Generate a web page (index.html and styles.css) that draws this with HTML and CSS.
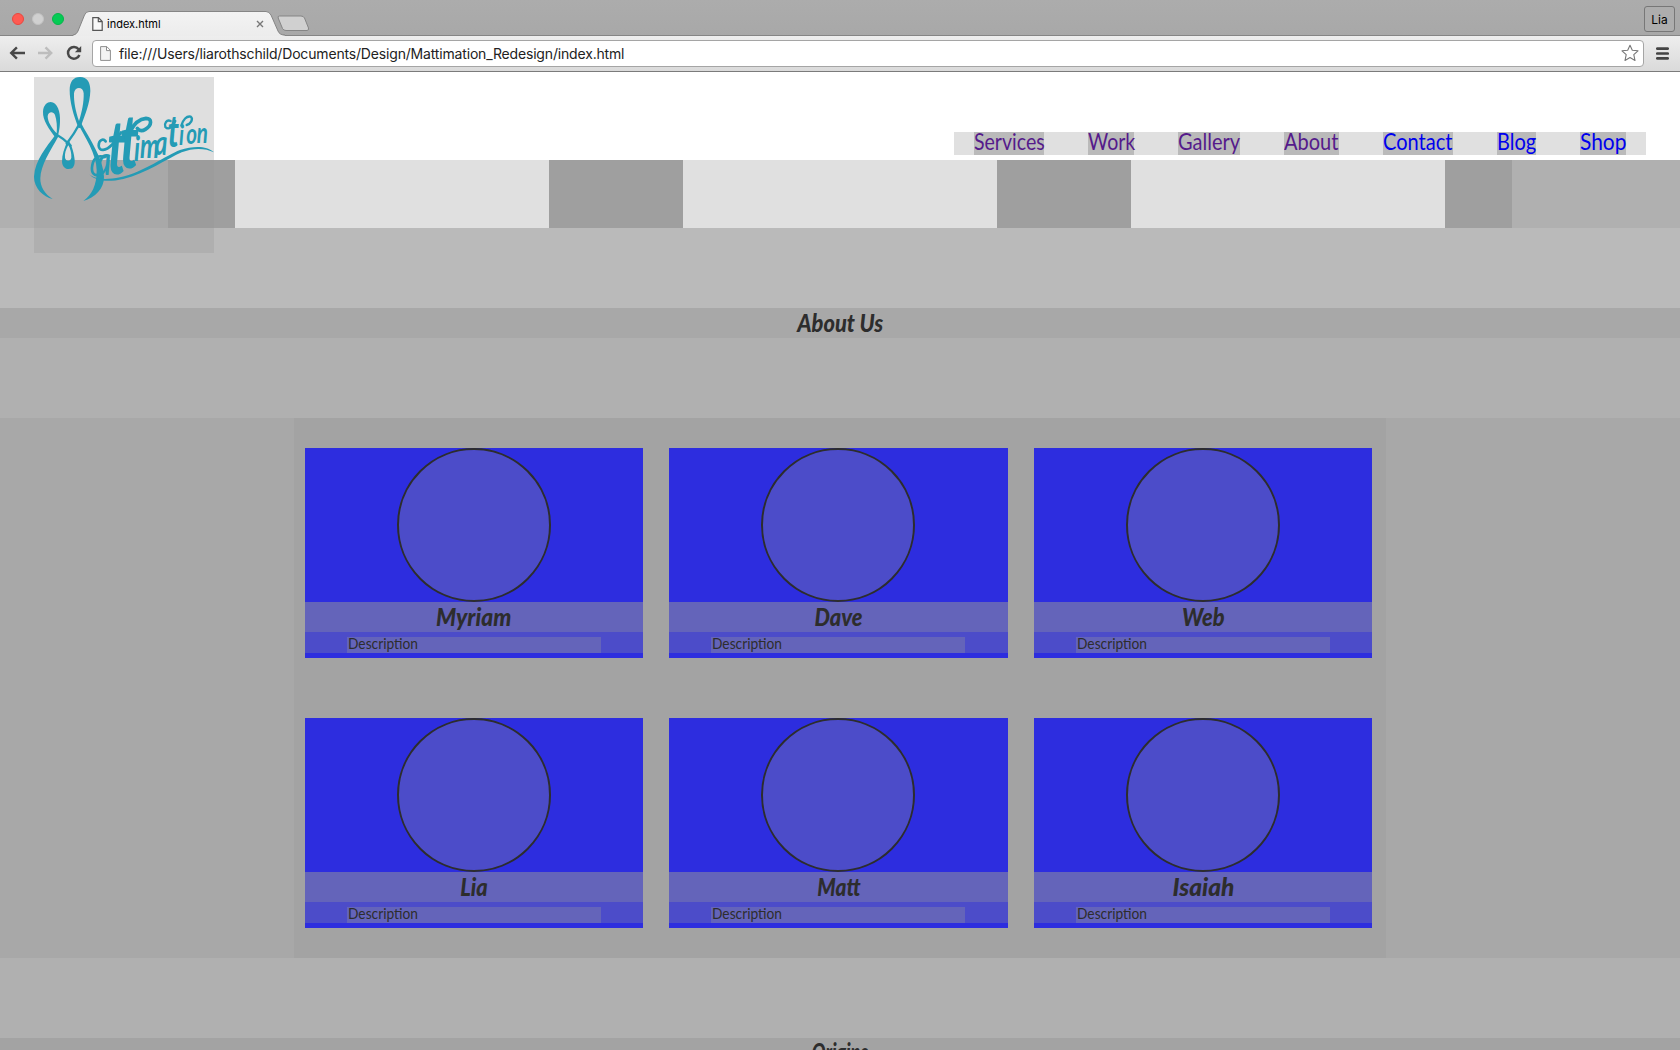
FILE: index.html
```html
<!DOCTYPE html>
<html lang="en">
<head>
<meta charset="utf-8">
<title>index.html</title>
<link rel="stylesheet" href="styles.css">
</head>
<body>
<header class="browser">
  <div class="tabstrip">
    <div class="lights"><i class="light red"></i><i class="light idle"></i><i class="light green"></i></div>
    <div class="tab">
      <svg class="tab-shape" width="212" height="25" viewBox="0 0 212 25">
        <defs><linearGradient id="tabfill" x1="0" y1="0" x2="0" y2="1"><stop offset="0" stop-color="#f3f3f3"/><stop offset="1" stop-color="#ececec"/></linearGradient></defs>
        <path d="M0 24.5C3 24 4 22 5 20L11.500 4Q13 .5 16 .5H193Q196 .5 198 4L205 20C206 22.500 208 24 212 24.500V25H0Z" fill="url(#tabfill)"/>
        <path d="M0 24C3 23.500 4 22 5 20L11.500 4Q13 .5 16 .5H193Q196 .5 198 4L205 20C206 22.500 208 24 212 24" fill="none" stroke="#858585"/>
      </svg>
      <svg class="tab-page" width="11" height="14" viewBox="0 0 11 14"><path d="M.8.7H6.500L10.200 4.500V13.300H.8ZM6.300.7V4.700H10.200" fill="#f8f8f8" stroke="#555" stroke-width="1.200"/></svg>
      <span class="tab-title">index.html</span>
      <svg class="tab-close" width="8" height="8" viewBox="0 0 8 8"><path d="M1 1L7 7M7 1L1 7" stroke="#777" stroke-width="1.400"/></svg>
    </div>
    <svg class="newtab" width="33" height="17" viewBox="0 0 33 17"><path d="M2.500 1H24Q26.500 1 27.500 3L31.500 13Q32 15.500 30 15.500H9Q6.500 15.500 5.500 13.500L1.200 3Q.5 1 2.500 1Z" fill="#d0d0d0" stroke="#858585"/></svg>
    <div class="user">Lia</div>
  </div>
  <div class="toolbar">
    <svg width="16" height="14" viewBox="0 0 16 14"><path d="M16 7H2.500M7.900 1.300L2.200 7L7.900 12.700" fill="none" stroke="#484848" stroke-width="2.400"/></svg>
    <svg width="16" height="14" viewBox="0 0 16 14"><path d="M1 7H13.500M8.500 1.300L14.200 7L8.500 12.700" fill="none" stroke="#bdbdbd" stroke-width="2.400"/></svg>
    <svg class="reload" width="16" height="16" viewBox="0 0 16 16"><path d="M12.600 4.200A5.900 5.900 0 1 0 13.400 10" fill="none" stroke="#484848" stroke-width="2.500"/><path d="M15.200 1V7.300H8.900Z" fill="#484848"/></svg>
    <div class="address">
      <svg width="11" height="15" viewBox="0 0 11 15"><path d="M.6.6H6.800L10.400 4.300V14.400H.6ZM6.500.6V4.600H10.400" fill="#f3f3f3" stroke="#8e8e8e"/></svg>
      <span class="url">file:///Users/liarothschild/Documents/Design/Mattimation_Redesign/index.html</span>
      <svg class="star" width="18" height="18" viewBox="0 0 18 18"><path d="M9 1.200L11.300 6.200L17 6.800L12.800 10.700L14 16.500L9 13.600L4 16.500L5.200 10.700L1 6.800L6.700 6.200Z" fill="#fff" stroke="#777" stroke-width="1.100" stroke-linejoin="round"/></svg>
    </div>
    <svg class="menu" width="13" height="13" viewBox="0 0 13 13"><path d="M1.300 1.600H11.700M1.300 6.500H11.700M1.300 11.400H11.700" stroke="#444" stroke-width="2.700" stroke-linecap="round"/></svg>
  </div>
</header>

<main class="page">
  <div class="logo">
    <svg width="180" height="176" viewBox="42 36 540 528" fill="#249bb5">
      <g fill-rule="evenodd">
        <path d="M110 222C85 190 68 165 69 140C70 120 82 111 92 111C112 112 122 140 120 170C119 195 115 210 110 222ZM110 205C95 190 83 170 83 154C84 140 100 138 105 150C110 165 112 185 110 205Z"/>
        <path d="M144 226C132 250 126 270 126 290C127 305 136 312 146 312C160 312 165 302 164 285C162 262 155 242 148 230ZM145 240C137 255 134 265 135 278C137 290 152 290 154 278C155 265 151 250 145 240Z"/>
        <path d="M176 190C160 150 149 110 149 75C149 50 160 36 180 36C202 36 211 52 211 78C210 115 195 150 181 188ZM177 168C167 140 161 110 162 85C164 64 190 64 191 85C192 110 186 140 177 168Z"/>
      </g>
      <path d="M106 210C80 245 45 285 42 335C42 370 70 395 98 402C75 388 60 365 61 340C62 300 90 260 116 212Z"/>
      <path d="M171 172C195 215 230 270 230 315C231 360 215 390 190 408C225 398 253 370 252 335C250 280 210 225 182 172Z"/>
      <path d="M205 325C222 345 260 345 300 337C370 322 440 270 480 255C520 242 560 241 582 262C555 249 520 248 485 262C440 282 380 325 310 342C265 352 225 350 205 325Z"/>
      <g fill="none" stroke="#249bb5" stroke-linecap="round">
        <path d="M108 208Q130 220 152 242M180 174Q162 208 140 236" stroke-width="7"/>
        <path d="M257 229C250 220 236 224 236 242C237 260 258 258 275 240C290 222 298 212 303 202M217 300C222 275 238 270 254 276M217 300C212 325 225 338 240 325" stroke-width="8"/>
        <path d="M330 200C340 180 355 162 378 160C396 160 397 180 376 193C366 199 357 196 352 190" stroke-width="11"/>
        <path d="M452 168C440 162 432 176 436 186C446 197 461 184 466 168M484 182C489 164 500 152 512 155C521 162 512 177 500 180" stroke-width="7"/>
      </g>
      <text class="logo-word" transform="scale(.7 1)"><tspan class="g-a" x="328" y="330">a</tspan><tspan class="g-t" x="374 428" y="327 310">tt</tspan><tspan class="g-m" x="489 514" y="288 280">im</tspan><tspan class="g-m" x="577" y="270">a</tspan><tspan class="g-t2" x="633" y="246">t</tspan><tspan class="g-n" x="681 712 758" y="240 238 235">ion</tspan></text>
    </svg>
  </div>

  <nav class="nav">
    <ul>
      <li><a class="seen"><span class="fit w85">Services</span></a></li>
      <li><a class="seen"><span class="fit w85">Work</span></a></li>
      <li><a class="seen"><span class="fit w88">Gallery</span></a></li>
      <li><a class="seen"><span class="fit w88">About</span></a></li>
      <li><a><span class="fit w88">Contact</span></a></li>
      <li><a><span class="fit w88">Blog</span></a></li>
      <li><a><span class="fit w91">Shop</span></a></li>
    </ul>
  </nav>

  <div class="strip"><i></i><i></i><i></i><i></i><i></i><i></i><i></i><i></i><i></i></div>
  <div class="spacer"></div>
  <h2 class="heading"><span class="fit w91">About Us</span></h2>
  <section class="team">
    <div class="people">
      <article class="card"><div class="photo"></div><h3><span class="fit w95">Myriam</span></h3><div class="desc"><p><span class="fit w86">Description</span></p></div></article>
      <article class="card"><div class="photo"></div><h3><span class="fit w91">Dave</span></h3><div class="desc"><p><span class="fit w86">Description</span></p></div></article>
      <article class="card"><div class="photo"></div><h3><span class="fit w91">Web</span></h3><div class="desc"><p><span class="fit w86">Description</span></p></div></article>
      <article class="card"><div class="photo"></div><h3><span class="fit w91">Lia</span></h3><div class="desc"><p><span class="fit w86">Description</span></p></div></article>
      <article class="card"><div class="photo"></div><h3><span class="fit w88">Matt</span></h3><div class="desc"><p><span class="fit w86">Description</span></p></div></article>
      <article class="card"><div class="photo"></div><h3><span class="fit w102">Isaiah</span></h3><div class="desc"><p><span class="fit w86">Description</span></p></div></article>
    </div>
  </section>
  <h2 class="heading origins"><span class="fit w76">Origins</span></h2>
</main>
</body>
</html>
```

FILE: styles.css
```css
* { box-sizing: border-box; }
body {
  margin: 0;
  height: 1050px;
  overflow: hidden;
  background: #fff;
  color: #2d2d2d;
  font-family: Lato, "Liberation Sans", sans-serif;
}
h2, h3, p, ul { margin: 0; padding: 0; }
svg { display: block; flex: none; }

/* browser window */
.browser { font-family: Inter, "Liberation Sans", sans-serif; color: #000; }
.tabstrip {
  display: flex;
  align-items: flex-end;
  height: 36px;
  padding-right: 5px;
  background: linear-gradient(#acacac, #a8a8a8);
  box-shadow: inset 0 -1px #858585;
}
.lights { display: flex; gap: 8px; width: 74px; padding: 0 0 11px 12px; }
.light { width: 12px; height: 12px; border-radius: 50%; }
.red { background: #ff5a52; border: 1px solid #e8483f; }
.idle { background: #d0d0d0; border: 1px solid #c2c2c2; }
.green { background: #05cb55; border: 1px solid #06b54a; }
.tab {
  position: relative;
  display: flex;
  align-items: center;
  width: 205px;
  height: 25px;
  padding-left: 18px;
}
.tab-shape { position: absolute; left: -1px; top: 0; }
.tab-page, .tab-title, .tab-close { position: relative; }
.tab-title { margin-left: 4px; font-size: 11px; line-height: 14px; }
.tab-close { margin-left: 95px; }
.newtab { margin: 0 auto 4px -2px; }
.user {
  width: 31px;
  height: 26px;
  margin-bottom: 4px;
  border: 1px solid #777;
  border-radius: 3px;
  background: #adadad;
  font-size: 12px;
  line-height: 25px;
  text-align: center;
}
.toolbar {
  display: flex;
  align-items: center;
  gap: 12px;
  height: 36px;
  padding: 0 11px 1px 9px;
  border-bottom: 1px solid #7b7b7b;
  background: linear-gradient(#eee, #dadada);
}
.reload { margin: 0 -1px 0 1px; }
.address {
  display: flex;
  align-items: center;
  flex: 1;
  height: 27px;
  margin-left: -1px;
  padding: 0 4px 0 7px;
  border: 1px solid #a5a5a5;
  border-radius: 4px;
  background: #fff;
}
.url { margin-left: 8px; font-size: 14px; letter-spacing: -.17px; color: #222; white-space: nowrap; }
.star { margin-left: auto; }

/* page */
.page { position: relative; }
.logo {
  position: absolute;
  left: 34px;
  top: 5px;
  width: 180px;
  height: 176px;
  background: rgba(150, 150, 150, .3);
}
.logo-word { font-weight: 700; font-style: italic; }
.g-a { font-size: 118px; }
.g-t { font-size: 225px; }
.g-m { font-size: 104px; }
.g-t2 { font-size: 132px; }
.g-n { font-size: 88px; }

.fit { display: inline-block; transform-origin: 0 50%; white-space: nowrap; }
.w76 { transform: scaleX(.76); }
.w85 { transform: scaleX(.85); }
.w86 { transform: scaleX(.86); }
.w88 { transform: scaleX(.87); }
.w91 { transform: scaleX(.91); }
.w95 { transform: scaleX(.95); }
.w102 { transform: scaleX(1.02); }

.nav { display: flex; justify-content: flex-end; height: 88px; padding: 60px 34px 5px; }
.nav ul {
  display: grid;
  grid-template-columns: 70px 46px 62px 55px 70px 39px 46px;
  column-gap: 44px;
  height: 23px;
  width: 692px;
  padding-left: 20px;
  background: #e0e0e0;
  list-style: none;
}
.nav a {
  display: block;
  height: 23px;
  background: #bababa;
  color: #00e;
  font-size: 23px;
  line-height: 18px;
}
.nav a.seen { color: #551a8b; }

.strip { display: grid; grid-template-columns: 168px 67px 314px 134px 314px 134px 314px 67px 168px; height: 68px; }
.strip i { background: #e0e0e0; }
.strip i:nth-child(even) { background: #9f9f9f; }
.strip i:first-child, .strip i:last-child { background: #b0b0b0; }

.spacer { height: 80px; background: #bababa; }
.heading {
  height: 30px;
  background: #a8a8a8;
  font-size: 24px;
  font-weight: 900;
  font-style: italic;
  line-height: 29px;
  text-align: center;
}
.heading .fit, .card h3 .fit { transform-origin: 50% 50%; }
.team {
  display: flex;
  justify-content: center;
  border: solid #b0b0b0;
  border-width: 80px 0;
  background: #a8a8a8;
}
.people {
  display: grid;
  grid-template-columns: 338px 339px 338px;
  justify-content: start;
  column-gap: 26px;
  row-gap: 60px;
  width: 1092px;
  height: 540px;
  padding: 30px 11px;
  background: #a3a3a3;
}
.card { height: 210px; background: #2d2ddf; }
.photo {
  width: 154px;
  height: 154px;
  margin: 0 0 0 92px;
  border: 2px solid #2d2d2d;
  border-radius: 50%;
  background: #4c4cc9;
}
.card h3 {
  height: 30px;
  background: #6464ba;
  font-size: 24px;
  font-weight: 900;
  font-style: italic;
  line-height: 29px;
  text-align: center;
}
.desc { height: 21px; padding: 5px 0 0 42px; background: #4c4cc9; }
.desc p { width: 254px; height: 16px; padding-left: 1px; background: #6464ba; font-size: 16px; line-height: 12px; }
.origins { background: #a3a3a3; line-height: 27px; }
```
